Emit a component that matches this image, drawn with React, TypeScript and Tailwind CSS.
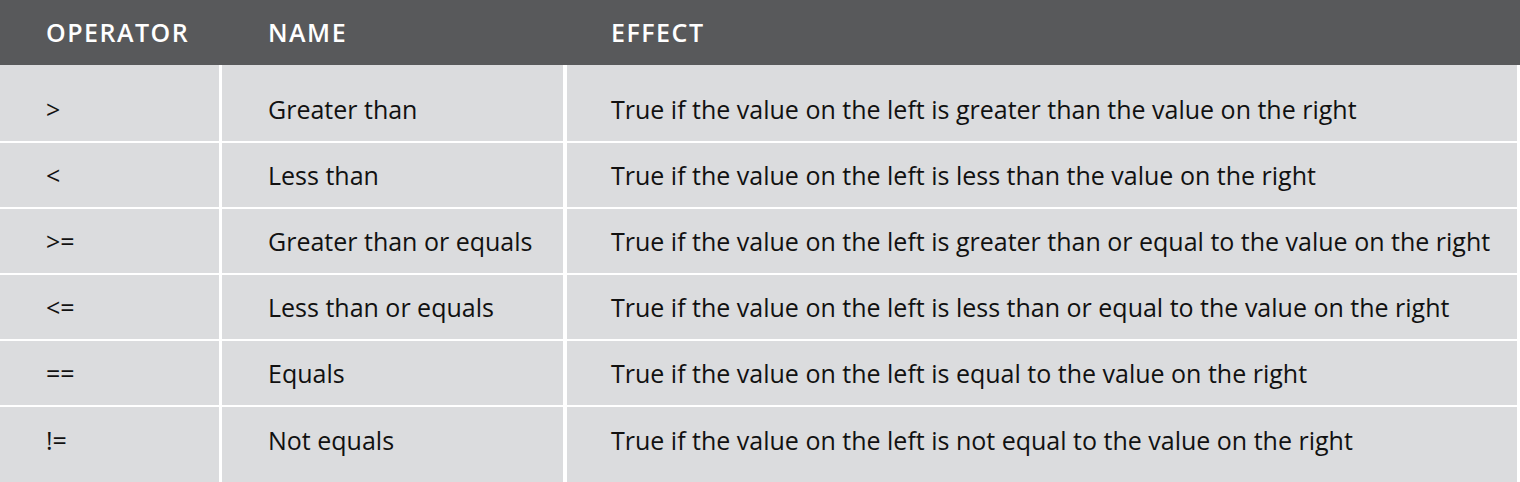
import React from "react";

const rows = [
  [">", "Greater than", "True if the value on the left is greater than the value on the right"],
  ["<", "Less than", "True if the value on the left is less than the value on the right"],
  [">=", "Greater than or equals", "True if the value on the left is greater than or equal to the value on the right"],
  ["<=", "Less than or equals", "True if the value on the left is less than or equal to the value on the right"],
  ["==", "Equals", "True if the value on the left is equal to the value on the right"],
  ["!=", "Not equals", "True if the value on the left is not equal to the value on the right"],
];

export default function App() {
  return (
    <div className="w-[1520px] h-[482px] overflow-hidden bg-white" style={{ fontFamily: '"Open Sans", "Noto Sans", sans-serif' }}>
      <div className="grid grid-cols-[222px_345px_1fr] h-[65px] bg-[#58595b] text-white text-[25px] font-semibold tracking-[1.5px] items-center">
        <div className="pl-[46px]">OPERATOR</div>
        <div className="pl-[46px]">NAME</div>
        <div className="pl-[44px]">EFFECT</div>
      </div>
      <div className="w-[1517px] flex flex-col gap-[2px]">
        {rows.map((r, i) => {
          const h = i === 0 ? "h-[76px] pt-[13px]" : i === rows.length - 1 ? "h-[80px] pb-[14px] pt-[2px]" : "h-[64px] pt-[2px]";
          return (
            <div key={i} className="grid grid-cols-[222px_345px_1fr] text-[25px] text-[#111]">
              <div className={`bg-[#dbdcde] border-r-[3px] border-white pl-[46px] flex items-center ${h}`}>{r[0]}</div>
              <div className={`bg-[#dbdcde] border-r-[4px] border-white pl-[46px] flex items-center ${h}`}>{r[1]}</div>
              <div className={`bg-[#dbdcde] pl-[44px] flex items-center ${h}`}>{r[2]}</div>
            </div>
          );
        })}
      </div>
    </div>
  );
}
